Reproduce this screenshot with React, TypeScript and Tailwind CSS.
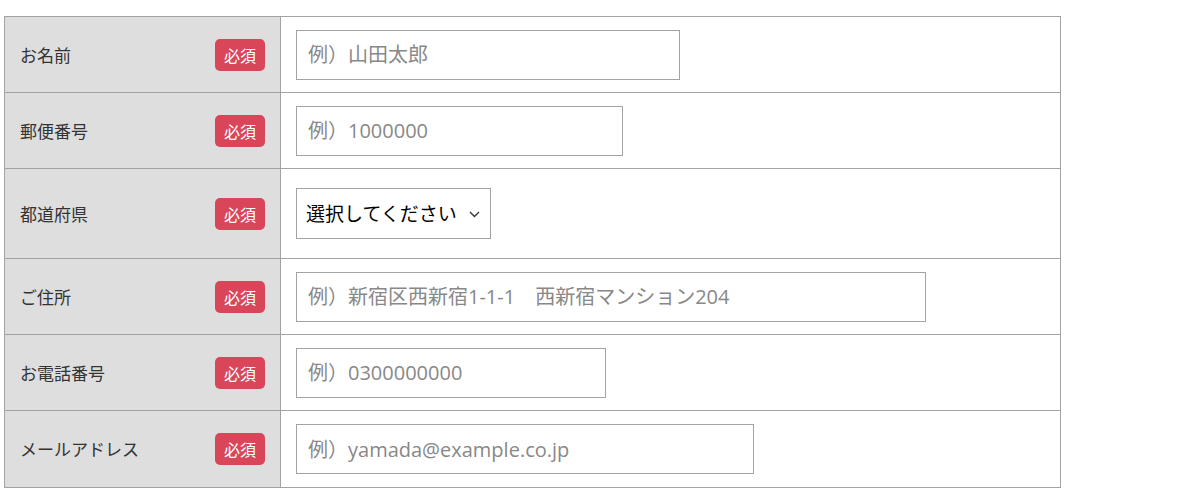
import React from 'react';

const font = { fontFamily: '"Noto Sans CJK JP", "Noto Sans", sans-serif' };
const inputFont = { fontFamily: '"Open Sans", "Noto Sans CJK JP", sans-serif' };

type Field = {
    label: string;
    placeholder?: string;
    width?: string;
    select?: boolean;
};

const fields: Field[] = [
    { label: 'お名前', placeholder: '例）山田太郎', width: 'w-[384px]' },
    { label: '郵便番号', placeholder: '例）1000000', width: 'w-[327px]' },
    { label: '都道府県', select: true },
    { label: 'ご住所', placeholder: '例）新宿区西新宿1-1-1　西新宿マンション204', width: 'w-[630px]' },
    { label: 'お電話番号', placeholder: '例）0300000000', width: 'w-[310px]' },
    { label: 'メールアドレス', placeholder: '例）yamada@example.co.jp', width: 'w-[458px]' },
];

const Badge = () => (
    <span className="flex h-[32px] w-[50px] items-center justify-center rounded-[5px] bg-[#d9465a] text-[16px] text-white">
        必須
    </span>
);

const Row = ({ field, last }: { field: Field; last: boolean }) => (
    <div className={`flex ${field.select ? 'h-[90px]' : 'h-[76px]'} ${last ? '' : 'border-b border-[#a3a3a3]'}`}>
        <div className="flex w-[276px] shrink-0 items-center justify-between border-r border-[#a3a3a3] bg-[#dedede] pl-[15px] pr-[15px]">
            <span className="text-[17px] text-[#333]">{field.label}</span>
            <Badge />
        </div>
        <div className="flex flex-1 items-center bg-white pl-[15px]">
            {field.select ? (
                <div className="relative">
                    <select
                        defaultValue=""
                        style={font}
                        className="h-[51px] w-[195px] appearance-none border border-[#a3a3a3] bg-white pl-[9px] text-[19px] text-black outline-none"
                    >
                        <option value="">選択してください</option>
                        <option>東京都</option>
                        <option>大阪府</option>
                    </select>
                    <svg
                        className="pointer-events-none absolute left-[173px] top-[22px]"
                        width="11"
                        height="8"
                        viewBox="0 0 11 8"
                        fill="none"
                    >
                        <path d="M1 2l4.5 4.5L10 2" stroke="#333" strokeWidth="1.3" />
                    </svg>
                </div>
            ) : (
                <input
                    type="text"
                    placeholder={field.placeholder}
                    style={inputFont}
                    className={`${field.width} h-[50px] border border-[#a3a3a3] bg-white px-[11px] text-[20px] text-[#333] outline-none placeholder:text-[#888]`}
                />
            )}
        </div>
    </div>
);

export default function App() {
    return (
        <div className="min-h-[500px] bg-white pl-[4px] pt-[16px]" style={font}>
            <div className="w-[1057px] border border-[#a3a3a3]">
                {fields.map((f, i) => (
                    <Row key={f.label} field={f} last={i === fields.length - 1} />
                ))}
            </div>
        </div>
    );
}
